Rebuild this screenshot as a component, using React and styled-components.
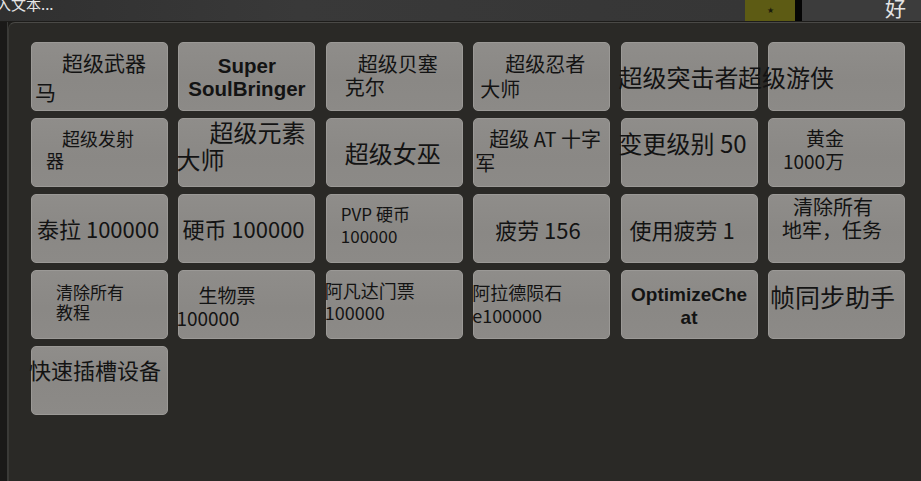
import React from 'react'
import styled, { createGlobalStyle } from 'styled-components'

const GlobalStyle = createGlobalStyle`
  html, body {
    margin: 0;
    padding: 0;
    background: #1d1c1a;
    overflow: hidden;
  }
  #root {
    width: 921px;
    height: 481px;
  }
`

const CJK = `"Noto Sans CJK SC", "Noto Sans", sans-serif`

const Screen = styled.div`
  width: 921px;
  height: 481px;
  display: flex;
  flex-direction: column;
  background: #1d1c1a;
`

const TopBar = styled.div`
  height: 21px;
  display: flex;
  align-items: stretch;
  background: #333333;
  overflow: hidden;
`

const InputField = styled.div`
  flex: 1;
  display: flex;
  align-items: flex-start;
  background: linear-gradient(90deg, #303030 0%, #393939 40%, #363636 100%);
  color: #e6e6e6;
  font-family: ${CJK};
  font-size: 15px;
  line-height: 15px;
  margin-top: -4px;
  text-indent: -4px;
`

const StarBox = styled.div`
  width: 50px;
  background: #5d5b14;
  display: flex;
  align-items: center;
  justify-content: center;
  color: #1a1a0a;
  font-size: 8px;
`

const Divider = styled.div`
  width: 7px;
  background: #050505;
`

const OkButton = styled.div`
  width: 119px;
  background: #3c3c3c;
  color: #e4e4e4;
  font-family: ${CJK};
  font-size: 21px;
  line-height: 21px;
  margin-top: -3px;
  display: flex;
  justify-content: flex-end;
  padding-right: 15px;
  box-sizing: border-box;
`

const Body = styled.div`
  flex: 1;
  display: flex;
  padding-top: 1px;
`

const LeftStrip = styled.div`
  width: 8px;
  border-right: 1px solid #3a3a38;
  box-sizing: border-box;
  background: #1a1918;
`

const Panel = styled.div`
  flex: 1;
  background: #2a2926;
  border-top: 1px solid #4a4946;
  border-left: 1px solid #3a3936;
  border-top-left-radius: 7px;
  padding: 19px 0 0 22px;
`

const Grid = styled.div`
  display: grid;
  grid-template-columns: repeat(6, 137px);
  grid-auto-rows: 69px;
  column-gap: 10.4px;
  row-gap: 7px;
`

const Button = styled.div`
  background: linear-gradient(180deg, #8f8d8a 0%, #8a8885 55%, #8c8a87 100%);
  border: 1px solid #9b9996;
  border-radius: 5px;
  box-sizing: border-box;
  display: flex;
  flex-direction: column;
  justify-content: center;
  align-items: ${p => (p.$center ? 'center' : 'flex-start')};
  color: #131313;
  font-family: ${p => (p.$bold ? `"Liberation Sans", Arial, sans-serif` : CJK)};
  font-weight: ${p => (p.$bold ? 700 : 400)};
  font-size: ${p => p.$size}px;
  white-space: nowrap;
  overflow: visible;
`

const Lines = styled.div`
  display: flex;
  flex-direction: column;
  align-items: inherit;
  margin-top: ${p => p.$dy * 2}px;
  line-height: ${p => p.$lh}px;
`

const Line = styled.span`
  display: block;
  margin-left: ${p => p.$x - 1}px;
`

const buttons = [
  { size: 21, lh: 29, dy: 0, lines: [['超级武器', 31], ['马', 4]] },
  { size: 20.5, lh: 23, dy: 0, bold: true, center: true, lines: [['Super', 0], ['SoulBringer', 0]] },
  { size: 20, lh: 23, dy: -2, lines: [['超级贝塞', 32], ['克尔', 19]] },
  { size: 20, lh: 25, dy: -1, lines: [['超级忍者', 32], ['大师', 7]] },
  { size: 24, lh: 30, dy: 0, lines: [['超级突击者', -2]] },
  { size: 24, lh: 30, dy: 0, lines: [['超级游侠', -30]] },

  { size: 18, lh: 22, dy: -3.5, lines: [['超级发射', 31], ['器', 15]] },
  { size: 24, lh: 27, dy: -8, lines: [['超级元素', 31], ['大师', -2]] },
  { size: 24, lh: 30, dy: 0, lines: [['超级女巫', 19]] },
  { size: 20, lh: 24, dy: -1.5, lines: [['超级 AT 十字', 16], ['军', 2]] },
  { size: 24, lh: 28, dy: -9.5, lines: [['变更级别 50', -2]] },
  { size: 19, lh: 23, dy: -4, lines: [['黄金', 38], ['1000万', 15]] },

  { size: 22, lh: 28, dy: -0.5, lines: [['泰拉 100000', 6]] },
  { size: 22, lh: 28, dy: -0.5, lines: [['硬币 100000', 4]] },
  { size: 17, lh: 22, dy: -3.5, lines: [['PVP 硬币', 15], ['100000', 15]] },
  { size: 22, lh: 28, dy: 0.5, lines: [['疲劳 156', 22]] },
  { size: 22, lh: 28, dy: 0.5, lines: [['使用疲劳 1', 9]] },
  { size: 20, lh: 23, dy: -11, lines: [['清除所有', 25], ['地牢，任务', 14]] },

  { size: 17, lh: 20, dy: -2.5, lines: [['清除所有', 25], ['教程', 25]] },
  { size: 19, lh: 23, dy: 1, lines: [['生物票', 20], ['100000', -2]] },
  { size: 18, lh: 22, dy: -3.5, lines: [['阿凡达门票', -1], ['100000', -1]] },
  { size: 18, lh: 23, dy: -1, lines: [['阿拉德陨石', -1], ['e100000', -1]] },
  { size: 19, lh: 23, dy: 1, bold: true, center: true, lines: [['OptimizeChe', 0], ['at', 0]] },
  { size: 25, lh: 30, dy: -8.5, lines: [['帧同步助手', 2]] },

  { size: 22, lh: 28, dy: -11.5, lines: [['快速插槽设备', -2]] },
]

export default function App() {
  return (
    <>
      <GlobalStyle />
      <Screen>
        <TopBar>
          <InputField>入文本...</InputField>
          <StarBox>★</StarBox>
          <Divider />
          <OkButton>好</OkButton>
        </TopBar>
        <Body>
          <LeftStrip />
          <Panel>
            <Grid>
              {buttons.map((b, i) => (
                <Button key={i} $size={b.size} $bold={b.bold} $center={b.center}>
                  <Lines $dy={b.dy} $lh={b.lh}>
                    {b.lines.map(([t, x], j) => (
                      <Line key={j} $x={b.center ? 1 : x}>{t}</Line>
                    ))}
                  </Lines>
                </Button>
              ))}
            </Grid>
          </Panel>
        </Body>
      </Screen>
    </>
  )
}
